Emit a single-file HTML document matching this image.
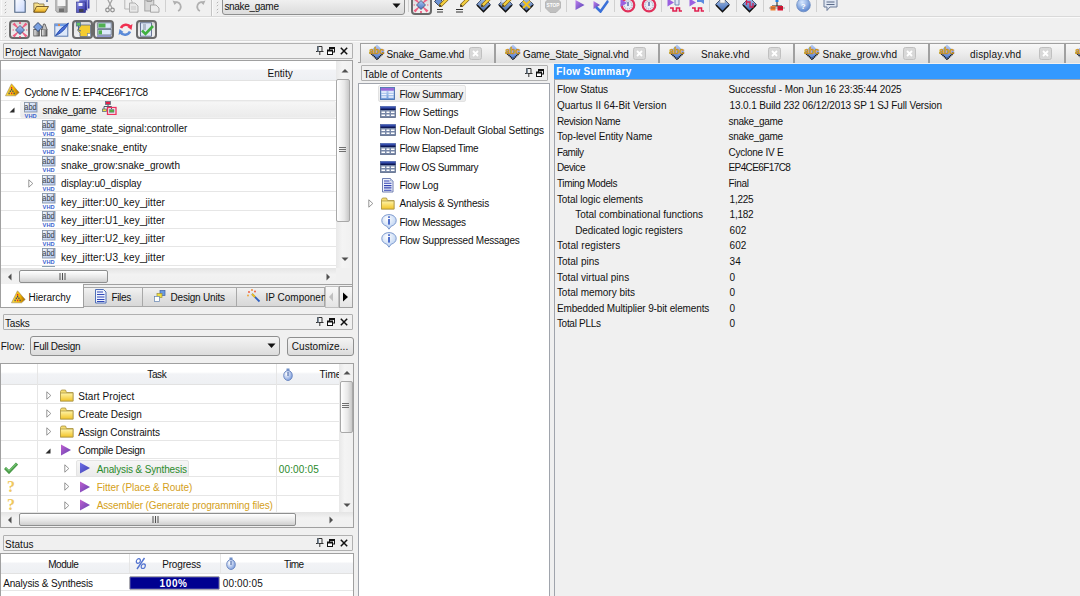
<!DOCTYPE html>
<html><head><meta charset="utf-8"><style>
html,body{margin:0;padding:0;width:1080px;height:596px;overflow:hidden;background:#f0f0f0;}
body{position:relative;}
div,svg{position:absolute;}
.t{font-family:"Liberation Sans",sans-serif;font-size:10px;line-height:10px;white-space:nowrap;color:#111;}
</style></head><body>
<div style="left:0px;top:16px;width:1080px;height:1px;background:#d9d9d9"></div><div style="left:0px;top:17px;width:1080px;height:1px;background:#fafafa"></div><div style="left:0px;top:40px;width:1080px;height:1px;background:#d9d9d9"></div><div style="left:0px;top:41px;width:1080px;height:1px;background:#fafafa"></div><div style="left:1px;top:0px;width:1px;height:15px;background:#fafafa"></div><svg style="left:3.5px;top:0.5px;" width="3" height="3" viewBox="0 0 3 3"><path d="M0.8 2.2 L2.2 0.8" stroke="#b4b4b4" stroke-width="1"/></svg><svg style="left:3.5px;top:4.0px;" width="3" height="3" viewBox="0 0 3 3"><path d="M0.8 2.2 L2.2 0.8" stroke="#b4b4b4" stroke-width="1"/></svg><svg style="left:3.5px;top:7.5px;" width="3" height="3" viewBox="0 0 3 3"><path d="M0.8 2.2 L2.2 0.8" stroke="#b4b4b4" stroke-width="1"/></svg><svg style="left:3.5px;top:11.0px;" width="3" height="3" viewBox="0 0 3 3"><path d="M0.8 2.2 L2.2 0.8" stroke="#b4b4b4" stroke-width="1"/></svg><svg style="left:14px;top:-3px;" width="12" height="16" viewBox="0 0 12 16"><defs><linearGradient id="nw" x1="0" y1="0" x2="1" y2="1"><stop offset="0" stop-color="#ffffff"/><stop offset="1" stop-color="#c8d8ff"/></linearGradient></defs><path d="M0.8 0.8 H8 L11.2 4 V15.2 H0.8 Z" fill="url(#nw)" stroke="#4e6482" stroke-width="1.1"/></svg><svg style="left:33px;top:-3px;" width="16" height="16" viewBox="0 0 16 16"><defs><linearGradient id="op" x1="0" y1="0" x2="0" y2="1"><stop offset="0" stop-color="#ffe680"/><stop offset="1" stop-color="#e8a818"/></linearGradient></defs><path d="M0.8 6 H5 L6 7 H11 V15 H0.8 Z" fill="#f6df8a" stroke="#8a7a50" stroke-width="0.9"/><path d="M0.8 15.2 L3.5 9.5 H15.5 L12.2 15.2 Z" fill="url(#op)" stroke="#6a5020" stroke-width="0.9"/><path d="M11 2 L14 2 L14 5" stroke="#4a6898" stroke-width="1.4" fill="none"/></svg><svg style="left:55px;top:-3px;" width="13" height="16" viewBox="0 0 13 16"><defs><linearGradient id="sv" x1="0" y1="0" x2="1" y2="0"><stop offset="0" stop-color="#c8c8c8"/><stop offset="1" stop-color="#909090"/></linearGradient></defs><path d="M0.8 0.8 H12.2 V15.2 H2 L0.8 14 Z" fill="url(#sv)" stroke="#8a8a8a" stroke-width="0.8"/><rect x="2.5" y="1" width="8" height="8" fill="#f4f4f4"/><rect x="4" y="11.5" width="5" height="3.5" fill="#707070"/></svg><svg style="left:76px;top:-3px;" width="14" height="16" viewBox="0 0 14 16"><defs><linearGradient id="sa" x1="0" y1="0" x2="1" y2="1"><stop offset="0" stop-color="#8a90e8"/><stop offset="1" stop-color="#3030a0"/></linearGradient></defs><rect x="5" y="0.5" width="8.5" height="11" fill="url(#sa)"/><rect x="3" y="2.5" width="8.5" height="11" fill="url(#sa)" stroke="#e8e8f8" stroke-width="0.5"/><rect x="0.5" y="5" width="9" height="10.5" fill="url(#sa)" stroke="#2a2a80" stroke-width="0.6"/><rect x="2.5" y="6" width="4" height="3" fill="#f0f0ff"/><rect x="3" y="12" width="4.5" height="3" fill="#404050"/></svg><div style="left:95.5px;top:0px;width:1px;height:12px;background:#d0d0d0"></div><svg style="left:105px;top:-3px;" width="10" height="16" viewBox="0 0 10 16"><path d="M2 1 L7 11 M8 1 L3 11" stroke="#a0a0a0" stroke-width="1.2"/><circle cx="2.5" cy="13" r="1.8" fill="none" stroke="#909090" stroke-width="1.2"/><circle cx="7.5" cy="13" r="1.8" fill="none" stroke="#909090" stroke-width="1.2"/></svg><svg style="left:124px;top:-3px;" width="15" height="16" viewBox="0 0 15 16"><path d="M0.8 2 H6 L8 4 V12 H0.8 Z" fill="#f0f0f0" stroke="#b0b0b0" stroke-width="0.9"/><path d="M5.5 6 H11 L14 9 V15.2 H5.5 Z" fill="#e8e8e8" stroke="#a8a8a8" stroke-width="0.9"/><path d="M7 10 H12 M7 12 H12" stroke="#c0c0c0" stroke-width="0.8"/></svg><svg style="left:144px;top:-3px;" width="16" height="16" viewBox="0 0 16 16"><rect x="0.8" y="3" width="9" height="11" fill="#d8d8d8" stroke="#a0a0a0" stroke-width="0.9"/><rect x="3" y="1.5" width="4.5" height="3" fill="#b8b8b8" stroke="#909090" stroke-width="0.7"/><path d="M6.5 8 H12 L15 11 V15.2 H6.5 Z" fill="#ececec" stroke="#a0a0a0" stroke-width="0.9"/></svg><div style="left:164.5px;top:0px;width:1px;height:12px;background:#d0d0d0"></div><svg style="left:172px;top:-3px;" width="12" height="16" viewBox="0 0 12 16"><path d="M2.5 6 A4 4.5 0 1 1 6 14" fill="none" stroke="#b0b0b0" stroke-width="1.8"/><path d="M0.5 3.5 L2.5 8 L5.5 5 Z" fill="#b0b0b0"/></svg><svg style="left:194px;top:-3px;" width="12" height="16" viewBox="0 0 12 16"><path d="M9.5 6 A4 4.5 0 1 0 6 14" fill="none" stroke="#b0b0b0" stroke-width="1.8"/><path d="M11.5 3.5 L9.5 8 L6.5 5 Z" fill="#b0b0b0"/></svg><div style="left:211px;top:0px;width:1px;height:16px;background:#c4c4c4"></div><div style="left:212px;top:0px;width:1px;height:16px;background:#fafafa"></div><svg style="left:215.5px;top:0.5px;" width="3" height="3" viewBox="0 0 3 3"><path d="M0.8 2.2 L2.2 0.8" stroke="#b4b4b4" stroke-width="1"/></svg><svg style="left:215.5px;top:4.0px;" width="3" height="3" viewBox="0 0 3 3"><path d="M0.8 2.2 L2.2 0.8" stroke="#b4b4b4" stroke-width="1"/></svg><svg style="left:215.5px;top:7.5px;" width="3" height="3" viewBox="0 0 3 3"><path d="M0.8 2.2 L2.2 0.8" stroke="#b4b4b4" stroke-width="1"/></svg><svg style="left:215.5px;top:11.0px;" width="3" height="3" viewBox="0 0 3 3"><path d="M0.8 2.2 L2.2 0.8" stroke="#b4b4b4" stroke-width="1"/></svg><div style="left:221.5px;top:-4px;width:183px;height:18.5px;border:1px solid #8e8f8f;border-radius:3px;box-sizing:border-box;background:linear-gradient(#f4f4f4,#e8e8e8 50%,#dcdcdc)"></div><div class="t" style="left:224.4px;top:1.5px;letter-spacing:-0.300px;">snake_game</div><svg style="left:392px;top:3px;" width="9" height="6" viewBox="0 0 9 6"><path d="M0.5 0.5 H8.5 L4.5 5 Z" fill="#111"/></svg><div style="left:407.5px;top:0px;width:1px;height:12px;background:#d0d0d0"></div><div style="left:410.5px;top:-4px;width:21.5px;height:18.5px;border:2px solid #6a6a6a;border-radius:4px;box-sizing:border-box;background:linear-gradient(#d4d4d4,#e6e6e6 40%,#f0f0f0)"></div><svg style="left:413px;top:-3.5px;" width="16" height="16" viewBox="0 0 16 16"><path d="M8 8 L0.5 2.5 L2.5 0.5 Z M8 8 L13.5 0.5 L15.5 2.5 Z M8 8 L15.5 13.5 L13.5 15.5 Z M8 8 L2.5 15.5 L0.5 13.5 Z" fill="#f05078" opacity="0.9"/><circle cx="8" cy="1" r="0.9" fill="#e83060"/><circle cx="8" cy="15" r="0.9" fill="#e83060"/><circle cx="1.2" cy="8" r="0.7" fill="#f06080"/><circle cx="14.8" cy="8" r="0.7" fill="#f06080"/><defs><linearGradient id="sdg" x1="0" y1="0" x2="0" y2="1"><stop offset="0" stop-color="#a8c8f8"/><stop offset="1" stop-color="#4a70b8"/></linearGradient></defs><path d="M8 3.5 L12.5 8 L8 12.5 L3.5 8 Z" fill="url(#sdg)" stroke="#304060" stroke-width="0.7"/></svg><svg style="left:434px;top:-3px;" width="9" height="9" viewBox="0 0 9 9"><path d="M4.5 0.5 L8.5 4.5 L4.5 8.5 L0.5 4.5 Z" fill="#6a90d0" stroke="#202840" stroke-width="0.8"/></svg><svg style="left:439px;top:-4px;" width="11" height="11" viewBox="0 0 11 11"><path d="M1.5 9.5 L8.5 2.5" stroke="#7a5a10" stroke-width="3.6" stroke-linecap="round"/><path d="M1.5 9.5 L8.5 2.5" stroke="#f4d040" stroke-width="2.4"/><path d="M8 3 L10 1" stroke="#e8204a" stroke-width="2.6"/><path d="M0.5 10.5 L2 9" stroke="#404040" stroke-width="1.2"/></svg><svg style="left:437px;top:9px;" width="6" height="4" viewBox="0 0 6 4"><path d="M0 0.5 H6 M0 3 H6" stroke="#303030" stroke-width="1"/></svg><svg style="left:460px;top:-4px;" width="11" height="11" viewBox="0 0 11 11"><path d="M1.5 9.5 L8.5 2.5" stroke="#7a5a10" stroke-width="3.6" stroke-linecap="round"/><path d="M1.5 9.5 L8.5 2.5" stroke="#f4d040" stroke-width="2.4"/><path d="M8 3 L10 1" stroke="#e8204a" stroke-width="2.6"/><path d="M0.5 10.5 L2 9" stroke="#404040" stroke-width="1.2"/></svg><svg style="left:456px;top:9px;" width="7" height="4" viewBox="0 0 7 4"><path d="M0 0.5 H7 M0 3 H7" stroke="#303030" stroke-width="1"/></svg><svg style="left:476px;top:-3px;" width="16" height="16" viewBox="0 0 16 16"><defs><linearGradient id="dg476-3" x1="0" y1="0" x2="0" y2="1"><stop offset="0" stop-color="#a8c4ee"/><stop offset="1" stop-color="#4a6ca8"/></linearGradient></defs><path d="M7.5 0.5 L14.5 7.5 L7.5 14.5 L0.5 7.5 Z" fill="url(#dg476-3)" stroke="#3a4a68" stroke-width="0.9"/><path d="M1 8.0 L7.5 14.7 L14 8.0" fill="none" stroke="#101010" stroke-width="1.6"/></svg><svg style="left:481px;top:-4px;" width="11" height="11" viewBox="0 0 11 11"><path d="M1.5 9.5 L8.5 2.5" stroke="#7a5a10" stroke-width="3.6" stroke-linecap="round"/><path d="M1.5 9.5 L8.5 2.5" stroke="#f4d040" stroke-width="2.4"/><path d="M8 3 L10 1" stroke="#e8204a" stroke-width="2.6"/><path d="M0.5 10.5 L2 9" stroke="#404040" stroke-width="1.2"/></svg><svg style="left:497.5px;top:-3px;" width="16" height="16" viewBox="0 0 16 16"><defs><linearGradient id="dg497-3" x1="0" y1="0" x2="0" y2="1"><stop offset="0" stop-color="#a8c4ee"/><stop offset="1" stop-color="#4a6ca8"/></linearGradient></defs><path d="M7.5 0.5 L14.5 7.5 L7.5 14.5 L0.5 7.5 Z" fill="url(#dg497-3)" stroke="#3a4a68" stroke-width="0.9"/><path d="M1 8.0 L7.5 14.7 L14 8.0" fill="none" stroke="#101010" stroke-width="1.6"/><rect x="3" y="0" width="6" height="6" fill="#d8e0f0" stroke="#8090b0" stroke-width="0.6"/></svg><svg style="left:502px;top:-4px;" width="11" height="11" viewBox="0 0 11 11"><path d="M1.5 9.5 L8.5 2.5" stroke="#7a5a10" stroke-width="3.6" stroke-linecap="round"/><path d="M1.5 9.5 L8.5 2.5" stroke="#f4d040" stroke-width="2.4"/><path d="M8 3 L10 1" stroke="#e8204a" stroke-width="2.6"/><path d="M0.5 10.5 L2 9" stroke="#404040" stroke-width="1.2"/></svg><svg style="left:519px;top:-3px;" width="16" height="16" viewBox="0 0 16 16"><defs><linearGradient id="dg519-3" x1="0" y1="0" x2="0" y2="1"><stop offset="0" stop-color="#a8c4ee"/><stop offset="1" stop-color="#4a6ca8"/></linearGradient></defs><path d="M7.5 0.5 L14.5 7.5 L7.5 14.5 L0.5 7.5 Z" fill="url(#dg519-3)" stroke="#3a4a68" stroke-width="0.9"/><path d="M1 8.0 L7.5 14.7 L14 8.0" fill="none" stroke="#101010" stroke-width="1.6"/><path d="M4 4 L11 11 M11 4 L4 11" stroke="#f0c020" stroke-width="2"/></svg><div style="left:539.5px;top:0px;width:1px;height:12px;background:#d0d0d0"></div><svg style="left:545px;top:-3px;" width="16" height="16" viewBox="0 0 16 16"><path d="M5 0.5 H11 L15.5 5 V11 L11 15.5 H5 L0.5 11 V5 Z" fill="#c0c0c0" stroke="#b0b0b0" stroke-width="0.8"/><text x="1.5" y="10" font-family="Liberation Sans" font-weight="bold" font-size="5.5" fill="#fff" textLength="13" lengthAdjust="spacingAndGlyphs">STOP</text></svg><div style="left:566px;top:0px;width:1px;height:12px;background:#d0d0d0"></div><svg style="left:575px;top:-3px;" width="10" height="14" viewBox="0 0 10 14"><defs><linearGradient id="pl1" x1="0" y1="0" x2="1" y2="1"><stop offset="0" stop-color="#c080f0"/><stop offset="1" stop-color="#5040b0"/></linearGradient></defs><path d="M0.5 3 L9.5 8 L0.5 13 Z" fill="url(#pl1)"/></svg><svg style="left:593px;top:-3px;" width="16" height="16" viewBox="0 0 16 16"><defs><linearGradient id="pl2" x1="0" y1="0" x2="1" y2="1"><stop offset="0" stop-color="#c080f0"/><stop offset="1" stop-color="#5040b0"/></linearGradient></defs><path d="M0.5 4 L7 8 L0.5 12 Z" fill="url(#pl2)"/><path d="M3 10 L7.5 14.5 L15 4" fill="none" stroke="#3a70d8" stroke-width="2.6"/><path d="M12 0.5 L15.5 3" stroke="#2050b0" stroke-width="2"/></svg><div style="left:613.5px;top:0px;width:1px;height:12px;background:#d0d0d0"></div><svg style="left:619.5px;top:-3px;" width="16" height="16" viewBox="0 0 16 16"><circle cx="8" cy="8" r="6.3" fill="#e8ecf8" stroke="#e0305a" stroke-width="2.2"/><circle cx="8" cy="8" r="4" fill="none" stroke="#606070" stroke-width="0.6" stroke-dasharray="1 1"/><rect x="7" y="5" width="2" height="4" fill="#8090c0"/><path d="M3 1 H13" stroke="#606060" stroke-width="1.5"/><path d="M0.5 2 L7 6 L0.5 10 Z" fill="#9a60e0"/></svg><svg style="left:641px;top:-3px;" width="16" height="16" viewBox="0 0 16 16"><circle cx="8" cy="8" r="6.3" fill="#e8ecf8" stroke="#e0305a" stroke-width="2.2"/><circle cx="8" cy="8" r="4" fill="none" stroke="#606070" stroke-width="0.6" stroke-dasharray="1 1"/><rect x="7" y="5" width="2" height="4" fill="#8090c0"/><path d="M3 1 H13" stroke="#606060" stroke-width="1.5"/></svg><div style="left:661px;top:0px;width:1px;height:12px;background:#d0d0d0"></div><svg style="left:666.5px;top:-3px;" width="16" height="16" viewBox="0 0 16 16"><path d="M0.5 1.5 L7 5.5 L0.5 9.5 Z" fill="#9a60e0"/><path d="M3 11 H6 V14 H9.5 V11 H12.5 V14 H15" fill="none" stroke="#e02050" stroke-width="1.6"/><path d="M8 0 V8 H12 V0" fill="#dde6f6" stroke="#6a80b0" stroke-width="0.9"/></svg><svg style="left:688.5px;top:-3px;" width="16" height="16" viewBox="0 0 16 16"><path d="M0.5 1.5 L7 5.5 L0.5 9.5 Z" fill="#9a60e0"/><path d="M3 11 H6 V14 H9.5 V11 H12.5 V14 H15" fill="none" stroke="#e02050" stroke-width="1.6"/><path d="M8 3 H12 L15 0.5 V7 L12 5 H8 Z" fill="#5a8ae0"/></svg><div style="left:709px;top:0px;width:1px;height:12px;background:#d0d0d0"></div><svg style="left:715px;top:-3px;" width="16" height="16" viewBox="0 0 16 16"><defs><linearGradient id="dg715-3" x1="0" y1="0" x2="0" y2="1"><stop offset="0" stop-color="#b0ccf4"/><stop offset="1" stop-color="#3a64b0"/></linearGradient></defs><path d="M7.5 0.5 L14.5 7.5 L7.5 14.5 L0.5 7.5 Z" fill="url(#dg715-3)" stroke="#3a4a68" stroke-width="0.9"/><path d="M1 8.0 L7.5 14.7 L14 8.0" fill="none" stroke="#101010" stroke-width="1.6"/><rect x="5" y="0" width="5" height="6" fill="#f4f4f4" stroke="#909090" stroke-width="0.5"/></svg><div style="left:736px;top:0px;width:1px;height:12px;background:#d0d0d0"></div><svg style="left:742px;top:-3px;" width="16" height="16" viewBox="0 0 16 16"><defs><linearGradient id="dg742-3" x1="0" y1="0" x2="0" y2="1"><stop offset="0" stop-color="#b0ccf4"/><stop offset="1" stop-color="#3a64b0"/></linearGradient></defs><path d="M7.5 0.5 L14.5 7.5 L7.5 14.5 L0.5 7.5 Z" fill="url(#dg742-3)" stroke="#3a4a68" stroke-width="0.9"/><path d="M1 8.0 L7.5 14.7 L14 8.0" fill="none" stroke="#101010" stroke-width="1.6"/><path d="M4.5 2 V8 M4.5 5 H8 V10 H11 V6" stroke="#d02050" stroke-width="1.3" fill="none"/></svg><div style="left:762.5px;top:0px;width:1px;height:12px;background:#d0d0d0"></div><svg style="left:769px;top:-3px;" width="16" height="16" viewBox="0 0 16 16"><rect x="6.5" y="0" width="3" height="5" fill="#2080e0"/><path d="M8 5 V9 M3 9 H13" stroke="#202020" stroke-width="1"/><rect x="1.5" y="9" width="5" height="4.5" fill="#f08030"/><rect x="8.5" y="9" width="5.5" height="4.5" fill="#e01030"/><path d="M0 11 H16" stroke="#404040" stroke-width="0.5"/></svg><div style="left:789px;top:0px;width:1px;height:12px;background:#d0d0d0"></div><svg style="left:795.5px;top:-3px;" width="15" height="16" viewBox="0 0 15 16"><defs><radialGradient id="hg" cx="0.4" cy="0.3" r="0.8"><stop offset="0" stop-color="#d8e8ff"/><stop offset="1" stop-color="#4a78c8"/></radialGradient></defs><circle cx="7.5" cy="8" r="6.8" fill="url(#hg)" stroke="#6a8ac0" stroke-width="0.8"/><text x="4.8" y="11.5" font-family="Liberation Sans" font-weight="bold" font-size="8" fill="#fff">?</text></svg><div style="left:816px;top:0px;width:1px;height:12px;background:#d0d0d0"></div><svg style="left:822.5px;top:-3px;" width="15" height="16" viewBox="0 0 15 16"><path d="M1 2 H14 V10 H7 L4 13.5 V10 H1 Z" fill="#dfe6f2" stroke="#6a7a98" stroke-width="1"/><path d="M3.5 5 H11.5 M3.5 7.5 H11.5" stroke="#5a6a88" stroke-width="1"/></svg><div style="left:1px;top:18px;width:1px;height:22px;background:#fafafa"></div><svg style="left:3.5px;top:21.0px;" width="3" height="3" viewBox="0 0 3 3"><path d="M0.8 2.2 L2.2 0.8" stroke="#b4b4b4" stroke-width="1"/></svg><svg style="left:3.5px;top:24.5px;" width="3" height="3" viewBox="0 0 3 3"><path d="M0.8 2.2 L2.2 0.8" stroke="#b4b4b4" stroke-width="1"/></svg><svg style="left:3.5px;top:28.0px;" width="3" height="3" viewBox="0 0 3 3"><path d="M0.8 2.2 L2.2 0.8" stroke="#b4b4b4" stroke-width="1"/></svg><svg style="left:3.5px;top:31.5px;" width="3" height="3" viewBox="0 0 3 3"><path d="M0.8 2.2 L2.2 0.8" stroke="#b4b4b4" stroke-width="1"/></svg><svg style="left:3.5px;top:35.0px;" width="3" height="3" viewBox="0 0 3 3"><path d="M0.8 2.2 L2.2 0.8" stroke="#b4b4b4" stroke-width="1"/></svg><div style="left:9.3px;top:20.2px;width:20.9px;height:18.400000000000002px;border:2px solid #6a6a6a;border-radius:4px;box-sizing:border-box;background:linear-gradient(#d4d4d4,#e6e6e6 40%,#f0f0f0)"></div><svg style="left:11.8px;top:21.5px;" width="16" height="16" viewBox="0 0 16 16"><path d="M8 8 L0.5 2.5 L2.5 0.5 Z M8 8 L13.5 0.5 L15.5 2.5 Z M8 8 L15.5 13.5 L13.5 15.5 Z M8 8 L2.5 15.5 L0.5 13.5 Z" fill="#f05078" opacity="0.9"/><circle cx="8" cy="1" r="0.9" fill="#e83060"/><circle cx="8" cy="15" r="0.9" fill="#e83060"/><circle cx="1.2" cy="8" r="0.7" fill="#f06080"/><circle cx="14.8" cy="8" r="0.7" fill="#f06080"/><defs><linearGradient id="sdg" x1="0" y1="0" x2="0" y2="1"><stop offset="0" stop-color="#a8c8f8"/><stop offset="1" stop-color="#4a70b8"/></linearGradient></defs><path d="M8 3.5 L12.5 8 L8 12.5 L3.5 8 Z" fill="url(#sdg)" stroke="#304060" stroke-width="0.7"/></svg><svg style="left:33px;top:22px;" width="15" height="15" viewBox="0 0 15 15"><defs><linearGradient id="bn" x1="0" y1="0" x2="1" y2="0"><stop offset="0" stop-color="#f0f0f0"/><stop offset="1" stop-color="#606060"/></linearGradient></defs><rect x="0.8" y="7.5" width="5.5" height="6.5" fill="url(#bn)" stroke="#505050" stroke-width="0.8"/><rect x="8.5" y="7.5" width="5.5" height="6.5" fill="url(#bn)" stroke="#505050" stroke-width="0.8"/><path d="M9 7.5 L10.5 2 H12 L14 7.5" fill="#c0c0c0" stroke="#505050" stroke-width="0.8"/><path d="M5 0.5 L9.5 5 L5 9.5 L0.5 5 Z" fill="#7aa0e0" stroke="#203050" stroke-width="0.8"/></svg><svg style="left:54px;top:22px;" width="15" height="15" viewBox="0 0 15 15"><rect x="0.8" y="2" width="13" height="12.2" fill="#dde8fa" stroke="#5a7ab0" stroke-width="1"/><rect x="1" y="2.2" width="13" height="2" fill="#6a9ae8"/><circle cx="5" cy="3" r="1" fill="#f08020"/><path d="M1.5 13.5 Q6 6 14.5 1 Q11 9 3 13 Z" fill="#4a70d8" stroke="#1a40a0" stroke-width="0.8"/></svg><div style="left:72.2px;top:20.2px;width:21.200000000000003px;height:18.400000000000002px;border:2px solid #6a6a6a;border-radius:4px;box-sizing:border-box;background:linear-gradient(#d4d4d4,#e6e6e6 40%,#f0f0f0)"></div><svg style="left:75.5px;top:22px;" width="15" height="15" viewBox="0 0 15 15"><path d="M4 3 H14.5 V14.5 H4 V11 L1.5 8 L4 5 Z" fill="#f4cc30" stroke="#5a6a88" stroke-width="0.8"/><rect x="0.5" y="0.5" width="4" height="3.5" fill="#60c060" stroke="#4a6a8a" stroke-width="0.7"/><path d="M2.5 4 V8 L5 9" stroke="#4a6a8a" stroke-width="1" fill="none"/><rect x="11.5" y="11.5" width="3" height="3" fill="#ffffff" stroke="#6a80a0" stroke-width="0.6"/></svg><div style="left:93.4px;top:20.2px;width:21.099999999999994px;height:18.400000000000002px;border:2px solid #6a6a6a;border-radius:4px;box-sizing:border-box;background:linear-gradient(#d4d4d4,#e6e6e6 40%,#f0f0f0)"></div><svg style="left:96.5px;top:22px;" width="15" height="15" viewBox="0 0 15 15"><rect x="0.8" y="0.8" width="13.4" height="5.5" fill="#dde8fa" stroke="#5a6a80" stroke-width="0.8"/><rect x="1.5" y="1.5" width="7" height="4" fill="#50b050"/><rect x="0.8" y="7.5" width="13.4" height="5.5" fill="#dde8fa" stroke="#5a6a80" stroke-width="0.8"/><rect x="1.5" y="8.3" width="3.5" height="4" fill="#50b050"/><path d="M0.5 14.3 H14.5" stroke="#3040b0" stroke-width="1.4" stroke-dasharray="1 1"/></svg><svg style="left:118px;top:22px;" width="15" height="15" viewBox="0 0 15 15"><path d="M3 6 A5.5 5.5 0 0 1 12.5 5" fill="none" stroke="#f03050" stroke-width="2.6"/><path d="M14.5 2 L13.5 8 L9.5 5 Z" fill="#f03050"/><path d="M12 9.5 A5.5 5.5 0 0 1 2.5 10.5" fill="none" stroke="#5a8ad8" stroke-width="2.6"/><path d="M0.5 13 L1.5 7 L5.5 10 Z" fill="#5a8ad8"/></svg><div style="left:136px;top:20.2px;width:20.80000000000001px;height:18.400000000000002px;border:2px solid #6a6a6a;border-radius:4px;box-sizing:border-box;background:linear-gradient(#d4d4d4,#e6e6e6 40%,#f0f0f0)"></div><svg style="left:139px;top:22px;" width="15" height="15" viewBox="0 0 15 15"><rect x="1.5" y="0.8" width="11" height="13.4" fill="#dde6f6" stroke="#4a5a80" stroke-width="0.8"/><path d="M4 3 H7 M4 5 H7 M4 7 H7" stroke="#707888" stroke-width="0.8"/><path d="M3 8.5 L6.5 12 L14 4" fill="none" stroke="#40b040" stroke-width="2.6"/></svg><div style="left:3px;top:43px;width:350px;height:16px;border:1px solid #b0b0b0;border-radius:1px;box-sizing:border-box;background:#f0f0f0"></div><div class="t" style="left:5px;top:48px;letter-spacing:-0.023px;">Project Navigator</div><svg style="left:316px;top:46px;" width="8" height="9" viewBox="0 0 8 9"><path d="M1.5 0.5 H6 V5.5 H1.5 Z M0 5.5 H7.5 M3.8 5.5 V9" fill="none" stroke="#333" stroke-width="1"/><path d="M1.5 0.5 H3 V5.5 H1.5 Z" fill="#8090a0"/></svg><svg style="left:327px;top:47px;" width="8" height="8" viewBox="0 0 8 8"><rect x="2.5" y="0.5" width="5" height="4.5" fill="none" stroke="#111" stroke-width="1"/><rect x="0.5" y="3" width="5" height="4.5" fill="#fff" stroke="#111" stroke-width="1"/><path d="M2.5 1.3 H7.5 M0.5 3.8 H5.5" stroke="#111" stroke-width="1.4"/></svg><svg style="left:340px;top:47px;" width="8" height="8" viewBox="0 0 8 8"><path d="M0.8 0.8 L7.2 7.2 M7.2 0.8 L0.8 7.2" stroke="#111" stroke-width="1.5"/></svg><div style="left:0px;top:60px;width:353px;height:225px;border:1px solid #a0a0a0;border-bottom:none;box-sizing:border-box;background:#fff"></div><div style="left:1px;top:61px;width:335px;height:19px;background:linear-gradient(#ffffff 40%,#f2f3f6 50%,#eef0f3)"></div><div style="left:1px;top:80px;width:335px;height:1px;background:#e2e2e2"></div><div class="t" style="left:267.5px;top:69px;letter-spacing:0.038px;">Entity</div><div style="left:1px;top:99.6px;width:335px;height:1px;background:#e6e6e6"></div><div style="left:1px;top:117.93px;width:335px;height:1px;background:#e6e6e6"></div><div style="left:1px;top:136.26px;width:335px;height:1px;background:#e6e6e6"></div><div style="left:1px;top:154.59px;width:335px;height:1px;background:#e6e6e6"></div><div style="left:1px;top:172.92px;width:335px;height:1px;background:#e6e6e6"></div><div style="left:1px;top:191.25px;width:335px;height:1px;background:#e6e6e6"></div><div style="left:1px;top:209.58px;width:335px;height:1px;background:#e6e6e6"></div><div style="left:1px;top:227.91px;width:335px;height:1px;background:#e6e6e6"></div><div style="left:1px;top:246.24px;width:335px;height:1px;background:#e6e6e6"></div><div style="left:1px;top:264.57px;width:335px;height:1px;background:#e6e6e6"></div><div style="left:20px;top:100.5px;width:316px;height:17px;background:linear-gradient(#f6f6f6,#ebebeb);border:1px solid #f0f0f0;border-radius:2px;box-sizing:border-box"></div><div class="t" style="left:24.5px;top:87.6px;letter-spacing:-0.340px;">Cyclone IV E: EP4CE6F17C8</div><div class="t" style="left:42.5px;top:105.93px;letter-spacing:-0.344px;">snake_game</div><div class="t" style="left:61px;top:124.26px;letter-spacing:-0.060px;">game_state_signal:controller</div><svg style="left:42px;top:119.7px;" width="14" height="16" viewBox="0 0 14 16"><defs><linearGradient id="vg" x1="0" y1="0" x2="1" y2="1"><stop offset="0" stop-color="#f4f7fd"/><stop offset="1" stop-color="#aec4ee"/></linearGradient></defs><rect x="0.5" y="0.5" width="12.5" height="9.5" fill="url(#vg)" stroke="#8796a8" stroke-width="0.9"/><text x="0.3" y="8.4" font-family="Liberation Sans" font-size="8.6" fill="#3a3f46" textLength="12.4" lengthAdjust="spacingAndGlyphs">abd</text><text x="0.6" y="15.5" font-family="Liberation Sans" font-weight="bold" font-size="6" fill="#3a62d0" textLength="12" lengthAdjust="spacingAndGlyphs">VHD</text></svg><div class="t" style="left:61px;top:142.59px;letter-spacing:0.029px;">snake:snake_entity</div><svg style="left:42px;top:138.0px;" width="14" height="16" viewBox="0 0 14 16"><defs><linearGradient id="vg" x1="0" y1="0" x2="1" y2="1"><stop offset="0" stop-color="#f4f7fd"/><stop offset="1" stop-color="#aec4ee"/></linearGradient></defs><rect x="0.5" y="0.5" width="12.5" height="9.5" fill="url(#vg)" stroke="#8796a8" stroke-width="0.9"/><text x="0.3" y="8.4" font-family="Liberation Sans" font-size="8.6" fill="#3a3f46" textLength="12.4" lengthAdjust="spacingAndGlyphs">abd</text><text x="0.6" y="15.5" font-family="Liberation Sans" font-weight="bold" font-size="6" fill="#3a62d0" textLength="12" lengthAdjust="spacingAndGlyphs">VHD</text></svg><div class="t" style="left:61px;top:160.92px;">snake_grow:snake_growth</div><svg style="left:42px;top:156.3px;" width="14" height="16" viewBox="0 0 14 16"><defs><linearGradient id="vg" x1="0" y1="0" x2="1" y2="1"><stop offset="0" stop-color="#f4f7fd"/><stop offset="1" stop-color="#aec4ee"/></linearGradient></defs><rect x="0.5" y="0.5" width="12.5" height="9.5" fill="url(#vg)" stroke="#8796a8" stroke-width="0.9"/><text x="0.3" y="8.4" font-family="Liberation Sans" font-size="8.6" fill="#3a3f46" textLength="12.4" lengthAdjust="spacingAndGlyphs">abd</text><text x="0.6" y="15.5" font-family="Liberation Sans" font-weight="bold" font-size="6" fill="#3a62d0" textLength="12" lengthAdjust="spacingAndGlyphs">VHD</text></svg><div class="t" style="left:61px;top:179.25px;letter-spacing:-0.066px;">display:u0_display</div><svg style="left:42px;top:174.7px;" width="14" height="16" viewBox="0 0 14 16"><defs><linearGradient id="vg" x1="0" y1="0" x2="1" y2="1"><stop offset="0" stop-color="#f4f7fd"/><stop offset="1" stop-color="#aec4ee"/></linearGradient></defs><rect x="0.5" y="0.5" width="12.5" height="9.5" fill="url(#vg)" stroke="#8796a8" stroke-width="0.9"/><text x="0.3" y="8.4" font-family="Liberation Sans" font-size="8.6" fill="#3a3f46" textLength="12.4" lengthAdjust="spacingAndGlyphs">abd</text><text x="0.6" y="15.5" font-family="Liberation Sans" font-weight="bold" font-size="6" fill="#3a62d0" textLength="12" lengthAdjust="spacingAndGlyphs">VHD</text></svg><div class="t" style="left:61px;top:197.58px;letter-spacing:0.121px;">key_jitter:U0_key_jitter</div><svg style="left:42px;top:193.0px;" width="14" height="16" viewBox="0 0 14 16"><defs><linearGradient id="vg" x1="0" y1="0" x2="1" y2="1"><stop offset="0" stop-color="#f4f7fd"/><stop offset="1" stop-color="#aec4ee"/></linearGradient></defs><rect x="0.5" y="0.5" width="12.5" height="9.5" fill="url(#vg)" stroke="#8796a8" stroke-width="0.9"/><text x="0.3" y="8.4" font-family="Liberation Sans" font-size="8.6" fill="#3a3f46" textLength="12.4" lengthAdjust="spacingAndGlyphs">abd</text><text x="0.6" y="15.5" font-family="Liberation Sans" font-weight="bold" font-size="6" fill="#3a62d0" textLength="12" lengthAdjust="spacingAndGlyphs">VHD</text></svg><div class="t" style="left:61px;top:215.91px;letter-spacing:0.121px;">key_jitter:U1_key_jitter</div><svg style="left:42px;top:211.3px;" width="14" height="16" viewBox="0 0 14 16"><defs><linearGradient id="vg" x1="0" y1="0" x2="1" y2="1"><stop offset="0" stop-color="#f4f7fd"/><stop offset="1" stop-color="#aec4ee"/></linearGradient></defs><rect x="0.5" y="0.5" width="12.5" height="9.5" fill="url(#vg)" stroke="#8796a8" stroke-width="0.9"/><text x="0.3" y="8.4" font-family="Liberation Sans" font-size="8.6" fill="#3a3f46" textLength="12.4" lengthAdjust="spacingAndGlyphs">abd</text><text x="0.6" y="15.5" font-family="Liberation Sans" font-weight="bold" font-size="6" fill="#3a62d0" textLength="12" lengthAdjust="spacingAndGlyphs">VHD</text></svg><div class="t" style="left:61px;top:234.24px;letter-spacing:0.121px;">key_jitter:U2_key_jitter</div><svg style="left:42px;top:229.6px;" width="14" height="16" viewBox="0 0 14 16"><defs><linearGradient id="vg" x1="0" y1="0" x2="1" y2="1"><stop offset="0" stop-color="#f4f7fd"/><stop offset="1" stop-color="#aec4ee"/></linearGradient></defs><rect x="0.5" y="0.5" width="12.5" height="9.5" fill="url(#vg)" stroke="#8796a8" stroke-width="0.9"/><text x="0.3" y="8.4" font-family="Liberation Sans" font-size="8.6" fill="#3a3f46" textLength="12.4" lengthAdjust="spacingAndGlyphs">abd</text><text x="0.6" y="15.5" font-family="Liberation Sans" font-weight="bold" font-size="6" fill="#3a62d0" textLength="12" lengthAdjust="spacingAndGlyphs">VHD</text></svg><div class="t" style="left:61px;top:252.57px;letter-spacing:0.121px;">key_jitter:U3_key_jitter</div><svg style="left:42px;top:248.0px;" width="14" height="16" viewBox="0 0 14 16"><defs><linearGradient id="vg" x1="0" y1="0" x2="1" y2="1"><stop offset="0" stop-color="#f4f7fd"/><stop offset="1" stop-color="#aec4ee"/></linearGradient></defs><rect x="0.5" y="0.5" width="12.5" height="9.5" fill="url(#vg)" stroke="#8796a8" stroke-width="0.9"/><text x="0.3" y="8.4" font-family="Liberation Sans" font-size="8.6" fill="#3a3f46" textLength="12.4" lengthAdjust="spacingAndGlyphs">abd</text><text x="0.6" y="15.5" font-family="Liberation Sans" font-weight="bold" font-size="6" fill="#3a62d0" textLength="12" lengthAdjust="spacingAndGlyphs">VHD</text></svg><svg style="left:4.5px;top:83px;" width="15" height="14" viewBox="0 0 15 14"><defs><linearGradient id="wg" x1="0" y1="0" x2="1" y2="0"><stop offset="0" stop-color="#ffe040"/><stop offset="0.6" stop-color="#f5b800"/><stop offset="1" stop-color="#a06000"/></linearGradient></defs><path d="M6.5 0.8 L0.5 12.8 L10.5 12.8 L14.2 9.5 Z" fill="url(#wg)" stroke="#9a8a60" stroke-width="0.6"/><rect x="6" y="4" width="1.2" height="1.6" fill="#e0203a"/><rect x="6" y="5.8" width="1.2" height="1.6" fill="#304070"/><rect x="4.7" y="7.5" width="1.2" height="1.6" fill="#304070"/><rect x="7.3" y="7.5" width="1.2" height="1.6" fill="#304070"/><rect x="3.5" y="9.6" width="1.2" height="1.6" fill="#304070"/><rect x="6" y="9.6" width="1.2" height="1.6" fill="#e0203a"/><rect x="8.5" y="9.6" width="1.2" height="1.6" fill="#304070"/></svg><svg style="left:24px;top:101.5px;" width="14" height="16" viewBox="0 0 14 16"><defs><linearGradient id="vg" x1="0" y1="0" x2="1" y2="1"><stop offset="0" stop-color="#f4f7fd"/><stop offset="1" stop-color="#aec4ee"/></linearGradient></defs><rect x="0.5" y="0.5" width="12.5" height="9.5" fill="url(#vg)" stroke="#8796a8" stroke-width="0.9"/><text x="0.3" y="8.4" font-family="Liberation Sans" font-size="8.6" fill="#3a3f46" textLength="12.4" lengthAdjust="spacingAndGlyphs">abd</text><text x="0.6" y="15.5" font-family="Liberation Sans" font-weight="bold" font-size="6" fill="#3a62d0" textLength="12" lengthAdjust="spacingAndGlyphs">VHD</text></svg><svg style="left:9px;top:106.5px;" width="6" height="6" viewBox="0 0 6 6"><path d="M5.5 0.5 L5.5 5.5 L0.5 5.5 Z" fill="#2b2b2b"/></svg><svg style="left:102px;top:100.5px;" width="15" height="14" viewBox="0 0 15 14"><rect x="3.5" y="0.5" width="5" height="3" fill="#e8204a" stroke="#607080" stroke-width="0.8"/><path d="M6 3.5 V5.5 M2 5.5 H9.5 M2 5.5 V8 M9.5 5.5 V8" stroke="#4a5a6a" stroke-width="1" fill="none"/><rect x="0.5" y="8" width="4" height="2.5" fill="#f0e040" stroke="#607080" stroke-width="0.8"/><rect x="5.5" y="6.5" width="8.5" height="7" fill="none" stroke="#ee3060" stroke-width="1.3"/><rect x="7.5" y="8.7" width="4.5" height="2.5" fill="#50b040" stroke="#607080" stroke-width="0.6"/></svg><svg style="left:28px;top:178.5px;" width="6" height="9" viewBox="0 0 6 9"><path d="M0.8 0.8 L4.8 4.5 L0.8 8.2 Z" fill="#fff" stroke="#8a8a8a" stroke-width="0.9"/></svg><div style="left:42px;top:265.5px;width:13px;height:1.5px;background:#8aa0b0"></div><div style="left:336px;top:61px;width:16px;height:207px;background:linear-gradient(90deg,#e8e8e8,#f4f4f4 40%,#f0f0f0)"></div><svg style="left:341px;top:68px;" width="8" height="5" viewBox="0 0 8 5"><path d="M0.5 4.5 L4 1 L7.5 4.5 Z" fill="#505050"/></svg><div style="left:336px;top:78.5px;width:14px;height:143px;border:1px solid #a8a8a8;border-radius:2px;box-sizing:border-box;background:linear-gradient(90deg,#ffffff,#e8e8e8 60%,#c8c8c8)"></div><svg style="left:339px;top:147px;" width="8" height="6" viewBox="0 0 8 6"><path d="M0 0.5 H7 M0 2.5 H7 M0 4.5 H7" stroke="#707070" stroke-width="1"/></svg><svg style="left:341px;top:257px;" width="8" height="5" viewBox="0 0 8 5"><path d="M0.5 0.5 L4 4 L7.5 0.5 Z" fill="#505050"/></svg><div style="left:1px;top:268px;width:351px;height:16px;background:linear-gradient(#e4e4e4,#f2f2f2 40%,#f0f0f0)"></div><svg style="left:7px;top:272.5px;" width="5" height="8" viewBox="0 0 5 8"><path d="M4.5 0.5 L1 4 L4.5 7.5 Z" fill="#505050"/></svg><div style="left:18.5px;top:269.5px;width:89.5px;height:13px;border:1px solid #8e8f8f;border-radius:2px;box-sizing:border-box;background:linear-gradient(#ffffff,#e6e6e6 60%,#cfcfcf)"></div><svg style="left:59px;top:272.5px;" width="8" height="8" viewBox="0 0 8 8"><path d="M1 0 V7 M3.5 0 V7 M6 0 V7" stroke="#505050" stroke-width="1"/></svg><svg style="left:325.5px;top:272.5px;" width="5" height="8" viewBox="0 0 5 8"><path d="M0.5 0.5 L4 4 L0.5 7.5 Z" fill="#505050"/></svg><div style="left:336px;top:268px;width:16px;height:16px;background:#f0f0f0"></div><div style="left:0px;top:284px;width:353px;height:1px;background:#a0a0a0"></div><div style="left:0px;top:284px;width:84px;height:24px;background:#fff;border:1px solid #a0a0a0;border-top:none;box-sizing:border-box"></div><svg style="left:11px;top:289.5px;" width="15" height="14" viewBox="0 0 15 14"><defs><linearGradient id="wg" x1="0" y1="0" x2="1" y2="0"><stop offset="0" stop-color="#ffe040"/><stop offset="0.6" stop-color="#f5b800"/><stop offset="1" stop-color="#a06000"/></linearGradient></defs><path d="M6.5 0.8 L0.5 12.8 L10.5 12.8 L14.2 9.5 Z" fill="url(#wg)" stroke="#9a8a60" stroke-width="0.6"/><rect x="6" y="4" width="1.2" height="1.6" fill="#e0203a"/><rect x="6" y="5.8" width="1.2" height="1.6" fill="#304070"/><rect x="4.7" y="7.5" width="1.2" height="1.6" fill="#304070"/><rect x="7.3" y="7.5" width="1.2" height="1.6" fill="#304070"/><rect x="3.5" y="9.6" width="1.2" height="1.6" fill="#304070"/><rect x="6" y="9.6" width="1.2" height="1.6" fill="#e0203a"/><rect x="8.5" y="9.6" width="1.2" height="1.6" fill="#304070"/></svg><div class="t" style="left:28.5px;top:293px;letter-spacing:-0.074px;">Hierarchy</div><div style="left:84px;top:287px;width:59px;height:20px;background:linear-gradient(#f2f2f2,#e2e2e2 50%,#d8d8d8);border:1px solid #a8a8a8;border-left:none;box-sizing:border-box"></div><div class="t" style="left:111.5px;top:292.5px;letter-spacing:-0.353px;">Files</div><svg style="left:95px;top:288.5px;" width="12" height="15" viewBox="0 0 12 15"><path d="M0.5 0.5 H8.5 L11 3 V14 H0.5 Z" fill="#eef2fc" stroke="#5070b8"/><path d="M2 3 H8 M2 5.5 H9.5 M2 8 H9.5 M2 10.5 H9.5 M2 12.5 H9.5" stroke="#3048b8" stroke-width="1.1"/></svg><div style="left:143px;top:287px;width:94px;height:20px;background:linear-gradient(#f2f2f2,#e2e2e2 50%,#d8d8d8);border:1px solid #a8a8a8;border-left:none;box-sizing:border-box"></div><div class="t" style="left:170.5px;top:292.5px;letter-spacing:-0.190px;">Design Units</div><svg style="left:154px;top:289.5px;" width="12" height="12" viewBox="0 0 12 12"><rect x="6" y="0.5" width="5" height="5" fill="#6a9ae0" stroke="#4060a0" stroke-width="0.7"/><rect x="3" y="3.5" width="5" height="4" fill="#f0e040" stroke="#a09040" stroke-width="0.7"/><rect x="0.5" y="6.5" width="5" height="5" fill="#fff" stroke="#6080b0" stroke-width="0.7"/></svg><div style="left:237px;top:287px;width:88px;height:20px;background:linear-gradient(#f2f2f2,#e2e2e2 50%,#d8d8d8);border:1px solid #a8a8a8;border-left:none;box-sizing:border-box"></div><div class="t" style="left:265.5px;top:292.5px;">IP Componen</div><svg style="left:247px;top:288.5px;" width="14" height="14" viewBox="0 0 14 14"><path d="M5 5 L12.5 12.5" stroke="#3060c0" stroke-width="1.8"/><path d="M5 5 L8 8" stroke="#f0c020" stroke-width="1.8"/><circle cx="2" cy="3" r="0.9" fill="#f05030"/><circle cx="5" cy="1" r="0.9" fill="#f08030"/><circle cx="8" cy="2.5" r="0.9" fill="#f05030"/><circle cx="1" cy="6.5" r="0.9" fill="#f0a030"/></svg><div style="left:325px;top:286px;width:14px;height:22px;background:linear-gradient(#f8f8f8,#e4e4e4);border:1px solid #c0c0c0;box-sizing:border-box"></div><svg style="left:328px;top:292px;" width="6" height="10" viewBox="0 0 6 10"><path d="M5 0.5 L1 5 L5 9.5 Z" fill="#c0c0c0"/></svg><div style="left:339px;top:286px;width:14px;height:22px;background:linear-gradient(#f8f8f8,#e4e4e4);border:1px solid #a0a0a0;box-sizing:border-box"></div><svg style="left:342px;top:292px;" width="7" height="10" viewBox="0 0 7 10"><path d="M1 0.5 L6 5 L1 9.5 Z" fill="#000"/></svg><div style="left:352px;top:60px;width:1px;height:248px;background:#a0a0a0"></div><div style="left:3px;top:314px;width:350px;height:16px;border:1px solid #b0b0b0;border-radius:1px;box-sizing:border-box;background:#f0f0f0"></div><div class="t" style="left:5px;top:319px;letter-spacing:-0.190px;">Tasks</div><svg style="left:316px;top:317px;" width="8" height="9" viewBox="0 0 8 9"><path d="M1.5 0.5 H6 V5.5 H1.5 Z M0 5.5 H7.5 M3.8 5.5 V9" fill="none" stroke="#333" stroke-width="1"/><path d="M1.5 0.5 H3 V5.5 H1.5 Z" fill="#8090a0"/></svg><svg style="left:327px;top:318px;" width="8" height="8" viewBox="0 0 8 8"><rect x="2.5" y="0.5" width="5" height="4.5" fill="none" stroke="#111" stroke-width="1"/><rect x="0.5" y="3" width="5" height="4.5" fill="#fff" stroke="#111" stroke-width="1"/><path d="M2.5 1.3 H7.5 M0.5 3.8 H5.5" stroke="#111" stroke-width="1.4"/></svg><svg style="left:340px;top:318px;" width="8" height="8" viewBox="0 0 8 8"><path d="M0.8 0.8 L7.2 7.2 M7.2 0.8 L0.8 7.2" stroke="#111" stroke-width="1.5"/></svg><div class="t" style="left:0.7px;top:342px;letter-spacing:0.022px;">Flow:</div><div style="left:30px;top:336px;width:250px;height:20px;border:1px solid #8e8f8f;border-radius:3px;box-sizing:border-box;background:linear-gradient(#f4f4f4,#e8e8e8 50%,#dcdcdc)"></div><div class="t" style="left:33.3px;top:342px;letter-spacing:-0.266px;">Full Design</div><svg style="left:267px;top:343px;" width="9" height="6" viewBox="0 0 9 6"><path d="M0.5 0.5 H8.5 L4.5 5 Z" fill="#111"/></svg><div style="left:286.5px;top:337px;width:67px;height:19px;border:1px solid #8e8f8f;border-radius:3px;box-sizing:border-box;background:linear-gradient(#f4f4f4,#e8e8e8 50%,#dcdcdc)"></div><div class="t" style="left:291.7px;top:342px;letter-spacing:0.082px;">Customize...</div><div style="left:0px;top:363px;width:354px;height:165px;border:1px solid #a0a0a0;box-sizing:border-box;background:#fff"></div><div style="left:1px;top:364px;width:338px;height:20px;background:linear-gradient(#ffffff 40%,#f2f3f6 50%,#eef0f3)"></div><div style="left:1px;top:384px;width:338px;height:1px;background:#e2e2e2"></div><div style="left:37px;top:364px;width:1px;height:148px;background:#e6e6e6"></div><div style="left:276px;top:364px;width:1px;height:148px;background:#e6e6e6"></div><div class="t" style="left:147.3px;top:370px;letter-spacing:-0.387px;">Task</div><svg style="left:283px;top:368px;" width="10" height="13" viewBox="0 0 10 13"><defs><radialGradient id="sw" cx="0.35" cy="0.35" r="0.8"><stop offset="0" stop-color="#ffffff"/><stop offset="1" stop-color="#6a8fd8"/></radialGradient></defs><rect x="3.5" y="0.5" width="3" height="2" fill="#7090c8"/><ellipse cx="5" cy="7.5" rx="4.3" ry="5" fill="url(#sw)" stroke="#5a78b8" stroke-width="0.8"/><path d="M5 4 V8" stroke="#3a5aa0" stroke-width="1"/></svg><div class="t" style="left:319.5px;top:370px;">Time</div><div style="left:1px;top:403.0px;width:338px;height:1px;background:#e6e6e6"></div><div style="left:1px;top:421.33px;width:338px;height:1px;background:#e6e6e6"></div><div style="left:1px;top:439.66px;width:338px;height:1px;background:#e6e6e6"></div><div style="left:1px;top:457.99px;width:338px;height:1px;background:#e6e6e6"></div><div style="left:1px;top:476.32px;width:338px;height:1px;background:#e6e6e6"></div><div style="left:1px;top:494.65px;width:338px;height:1px;background:#e6e6e6"></div><div style="left:1px;top:512.98px;width:338px;height:1px;background:#e6e6e6"></div><svg style="left:46px;top:390.5px;" width="6" height="9" viewBox="0 0 6 9"><path d="M0.8 0.8 L4.8 4.5 L0.8 8.2 Z" fill="#fff" stroke="#8a8a8a" stroke-width="0.9"/></svg><svg style="left:60px;top:388.5px;" width="14" height="13" viewBox="0 0 14 13"><defs><linearGradient id="fg" x1="0" y1="0" x2="0" y2="1"><stop offset="0" stop-color="#fff4a8"/><stop offset="1" stop-color="#f2c428"/></linearGradient></defs><path d="M0.5 2.5 V12 H13 V3.5 H6.5 L5.5 1 H1.5 Z" fill="#f4dc70" stroke="#a89040" stroke-width="0.8"/><rect x="0.5" y="4" width="12.5" height="8" fill="url(#fg)" stroke="#b09a48" stroke-width="0.8"/></svg><div class="t" style="left:78.2px;top:391.5px;letter-spacing:0.080px;color:#111">Start Project</div><svg style="left:46px;top:408.8px;" width="6" height="9" viewBox="0 0 6 9"><path d="M0.8 0.8 L4.8 4.5 L0.8 8.2 Z" fill="#fff" stroke="#8a8a8a" stroke-width="0.9"/></svg><svg style="left:60px;top:406.8px;" width="14" height="13" viewBox="0 0 14 13"><defs><linearGradient id="fg" x1="0" y1="0" x2="0" y2="1"><stop offset="0" stop-color="#fff4a8"/><stop offset="1" stop-color="#f2c428"/></linearGradient></defs><path d="M0.5 2.5 V12 H13 V3.5 H6.5 L5.5 1 H1.5 Z" fill="#f4dc70" stroke="#a89040" stroke-width="0.8"/><rect x="0.5" y="4" width="12.5" height="8" fill="url(#fg)" stroke="#b09a48" stroke-width="0.8"/></svg><div class="t" style="left:78.2px;top:409.83px;letter-spacing:-0.030px;color:#111">Create Design</div><svg style="left:46px;top:427.2px;" width="6" height="9" viewBox="0 0 6 9"><path d="M0.8 0.8 L4.8 4.5 L0.8 8.2 Z" fill="#fff" stroke="#8a8a8a" stroke-width="0.9"/></svg><svg style="left:60px;top:425.2px;" width="14" height="13" viewBox="0 0 14 13"><defs><linearGradient id="fg" x1="0" y1="0" x2="0" y2="1"><stop offset="0" stop-color="#fff4a8"/><stop offset="1" stop-color="#f2c428"/></linearGradient></defs><path d="M0.5 2.5 V12 H13 V3.5 H6.5 L5.5 1 H1.5 Z" fill="#f4dc70" stroke="#a89040" stroke-width="0.8"/><rect x="0.5" y="4" width="12.5" height="8" fill="url(#fg)" stroke="#b09a48" stroke-width="0.8"/></svg><div class="t" style="left:78.2px;top:428.16px;letter-spacing:-0.098px;color:#111">Assign Constraints</div><svg style="left:45px;top:447.5px;" width="6" height="6" viewBox="0 0 6 6"><path d="M5.5 0.5 L5.5 5.5 L0.5 5.5 Z" fill="#2b2b2b"/></svg><svg style="left:60px;top:444.0px;" width="12" height="12" viewBox="0 0 12 12"><defs><linearGradient id="pg60444.0" x1="0" y1="0" x2="1" y2="1"><stop offset="0" stop-color="#c060d0"/><stop offset="1" stop-color="#6040b0"/></linearGradient></defs><path d="M1 0.5 L11 6 L1 11.5 Z" fill="url(#pg60444.0)"/></svg><div class="t" style="left:78.2px;top:446.49px;letter-spacing:-0.279px;color:#111">Compile Design</div><svg style="left:64px;top:463.8px;" width="6" height="9" viewBox="0 0 6 9"><path d="M0.8 0.8 L4.8 4.5 L0.8 8.2 Z" fill="#fff" stroke="#8a8a8a" stroke-width="0.9"/></svg><svg style="left:79px;top:462.3px;" width="12" height="12" viewBox="0 0 12 12"><defs><linearGradient id="pg79462.3" x1="0" y1="0" x2="1" y2="1"><stop offset="0" stop-color="#7070e8"/><stop offset="1" stop-color="#4040b0"/></linearGradient></defs><path d="M1 0.5 L11 6 L1 11.5 Z" fill="url(#pg79462.3)"/></svg><div style="left:75.5px;top:459.8px;width:113px;height:17px;background:linear-gradient(#f6f6f6,#ebebeb);border:1px solid #e4e4e4;border-radius:2px;box-sizing:border-box"></div><svg style="left:79px;top:462.3px;" width="12" height="12" viewBox="0 0 12 12"><defs><linearGradient id="pg79462.3" x1="0" y1="0" x2="1" y2="1"><stop offset="0" stop-color="#8080f0"/><stop offset="1" stop-color="#4040b0"/></linearGradient></defs><path d="M1 0.5 L11 6 L1 11.5 Z" fill="url(#pg79462.3)"/></svg><div class="t" style="left:96.7px;top:464.82px;letter-spacing:-0.132px;color:#2a8a2a">Analysis &amp; Synthesis</div><svg style="left:64px;top:482.1px;" width="6" height="9" viewBox="0 0 6 9"><path d="M0.8 0.8 L4.8 4.5 L0.8 8.2 Z" fill="#fff" stroke="#8a8a8a" stroke-width="0.9"/></svg><svg style="left:79px;top:480.6px;" width="12" height="12" viewBox="0 0 12 12"><defs><linearGradient id="pg79480.6" x1="0" y1="0" x2="1" y2="1"><stop offset="0" stop-color="#c060d0"/><stop offset="1" stop-color="#6040b0"/></linearGradient></defs><path d="M1 0.5 L11 6 L1 11.5 Z" fill="url(#pg79480.6)"/></svg><div class="t" style="left:96.7px;top:483.15px;letter-spacing:-0.020px;color:#d4a020">Fitter (Place &amp; Route)</div><svg style="left:64px;top:500.5px;" width="6" height="9" viewBox="0 0 6 9"><path d="M0.8 0.8 L4.8 4.5 L0.8 8.2 Z" fill="#fff" stroke="#8a8a8a" stroke-width="0.9"/></svg><svg style="left:79px;top:499.0px;" width="12" height="12" viewBox="0 0 12 12"><defs><linearGradient id="pg79499.0" x1="0" y1="0" x2="1" y2="1"><stop offset="0" stop-color="#c060d0"/><stop offset="1" stop-color="#6040b0"/></linearGradient></defs><path d="M1 0.5 L11 6 L1 11.5 Z" fill="url(#pg79499.0)"/></svg><div class="t" style="left:96.7px;top:501.48px;letter-spacing:-0.119px;color:#d4a020">Assembler (Generate programming files)</div><div class="t" style="left:278.7px;top:464.82px;letter-spacing:0.177px;color:#2a8a2a">00:00:05</div><svg style="left:4px;top:462px;" width="14" height="12" viewBox="0 0 14 12"><path d="M1 6 L5 10 L13 1.5" fill="none" stroke="#4a9a48" stroke-width="3"/><path d="M1.5 5.5 L5 9 L12.5 1.5" fill="none" stroke="#70c070" stroke-width="1.2"/></svg><div class="t" style="left:7px;top:481.65px;color:#efc860;font-size:16px;font-family:'Liberation Serif',serif;font-weight:bold">?</div><div class="t" style="left:7px;top:499.98px;color:#efc860;font-size:16px;font-family:'Liberation Serif',serif;font-weight:bold">?</div><div style="left:339px;top:364px;width:14px;height:148px;background:linear-gradient(90deg,#e8e8e8,#f4f4f4 40%,#f0f0f0)"></div><svg style="left:342.5px;top:370px;" width="8" height="5" viewBox="0 0 8 5"><path d="M0.5 4.5 L4 1 L7.5 4.5 Z" fill="#505050"/></svg><div style="left:339.5px;top:380.5px;width:13.5px;height:52px;border:1px solid #a8a8a8;border-radius:2px;box-sizing:border-box;background:linear-gradient(90deg,#ffffff,#e8e8e8 60%,#c8c8c8)"></div><svg style="left:342px;top:403px;" width="8" height="6" viewBox="0 0 8 6"><path d="M0 0.5 H7 M0 2.5 H7 M0 4.5 H7" stroke="#707070" stroke-width="1"/></svg><svg style="left:342.5px;top:502.5px;" width="8" height="5" viewBox="0 0 8 5"><path d="M0.5 0.5 L4 4 L7.5 0.5 Z" fill="#505050"/></svg><div style="left:1px;top:512px;width:352px;height:15px;background:linear-gradient(#e4e4e4,#f2f2f2 40%,#f0f0f0)"></div><svg style="left:7px;top:516px;" width="5" height="8" viewBox="0 0 5 8"><path d="M4.5 0.5 L1 4 L4.5 7.5 Z" fill="#505050"/></svg><div style="left:18.5px;top:513px;width:277px;height:13px;border:1px solid #8e8f8f;border-radius:2px;box-sizing:border-box;background:linear-gradient(#ffffff,#e6e6e6 60%,#cfcfcf)"></div><svg style="left:152px;top:516px;" width="8" height="8" viewBox="0 0 8 8"><path d="M1 0 V7 M3.5 0 V7 M6 0 V7" stroke="#505050" stroke-width="1"/></svg><svg style="left:328.5px;top:516px;" width="5" height="8" viewBox="0 0 5 8"><path d="M0.5 0.5 L4 4 L0.5 7.5 Z" fill="#505050"/></svg><div style="left:3px;top:534.5px;width:350px;height:16px;border:1px solid #b0b0b0;border-radius:1px;box-sizing:border-box;background:#f0f0f0"></div><div class="t" style="left:5px;top:539.5px;letter-spacing:0.030px;">Status</div><svg style="left:316px;top:537.5px;" width="8" height="9" viewBox="0 0 8 9"><path d="M1.5 0.5 H6 V5.5 H1.5 Z M0 5.5 H7.5 M3.8 5.5 V9" fill="none" stroke="#333" stroke-width="1"/><path d="M1.5 0.5 H3 V5.5 H1.5 Z" fill="#8090a0"/></svg><svg style="left:327px;top:538.5px;" width="8" height="8" viewBox="0 0 8 8"><rect x="2.5" y="0.5" width="5" height="4.5" fill="none" stroke="#111" stroke-width="1"/><rect x="0.5" y="3" width="5" height="4.5" fill="#fff" stroke="#111" stroke-width="1"/><path d="M2.5 1.3 H7.5 M0.5 3.8 H5.5" stroke="#111" stroke-width="1.4"/></svg><svg style="left:340px;top:538.5px;" width="8" height="8" viewBox="0 0 8 8"><path d="M0.8 0.8 L7.2 7.2 M7.2 0.8 L0.8 7.2" stroke="#111" stroke-width="1.5"/></svg><div style="left:0px;top:553px;width:354px;height:50px;border:1px solid #a0a0a0;box-sizing:border-box;background:#fff"></div><div style="left:1px;top:554px;width:352px;height:19px;background:linear-gradient(#ffffff 40%,#f2f3f6 50%,#eef0f3)"></div><div style="left:1px;top:573px;width:352px;height:1px;background:#e2e2e2"></div><div style="left:128.5px;top:554px;width:1px;height:19px;background:#e6e6e6"></div><div style="left:220px;top:554px;width:1px;height:19px;background:#e6e6e6"></div><div class="t" style="left:48.2px;top:560px;letter-spacing:-0.427px;">Module</div><svg style="left:134px;top:557px;" width="13" height="13" viewBox="0 0 13 13"><path d="M10.5 1 L3 12" stroke="#5474d0" stroke-width="1.4"/><ellipse cx="4.2" cy="4" rx="2" ry="2.3" fill="none" stroke="#5474d0" stroke-width="1.2" transform="skewX(-12) translate(1 0)"/><ellipse cx="9.2" cy="9.2" rx="2" ry="2.3" fill="none" stroke="#5474d0" stroke-width="1.2" transform="skewX(-12) translate(2 0)"/></svg><div class="t" style="left:162.2px;top:560px;letter-spacing:-0.159px;">Progress</div><svg style="left:226px;top:557px;" width="10" height="13" viewBox="0 0 10 13"><defs><radialGradient id="sw" cx="0.35" cy="0.35" r="0.8"><stop offset="0" stop-color="#ffffff"/><stop offset="1" stop-color="#6a8fd8"/></radialGradient></defs><rect x="3.5" y="0.5" width="3" height="2" fill="#7090c8"/><ellipse cx="5" cy="7.5" rx="4.3" ry="5" fill="url(#sw)" stroke="#5a78b8" stroke-width="0.8"/><path d="M5 4 V8" stroke="#3a5aa0" stroke-width="1"/></svg><div class="t" style="left:284px;top:560px;letter-spacing:-0.600px;">Time</div><div class="t" style="left:3.2px;top:579px;letter-spacing:-0.159px;">Analysis &amp; Synthesis</div><div style="left:129px;top:576px;width:90.5px;height:14px;border:1px solid #a8a8b0;border-radius:2px;box-sizing:border-box;background:#000090;box-shadow:inset 0 0 0 1px #3030a0"></div><div class="t" style="left:159.6px;top:579px;letter-spacing:0.600px;color:#fff;font-weight:bold">100%</div><div class="t" style="left:222.7px;top:579px;letter-spacing:0.177px;">00:00:05</div><div style="left:1px;top:589.5px;width:352px;height:1px;background:#e6e6e6"></div><div style="left:358px;top:62px;width:722px;height:1px;background:#a0a0a0"></div><div style="left:360px;top:43px;width:134.5px;height:19.5px;background:linear-gradient(#f8f8f8,#ececec 50%,#dedede);border:1px solid #a0a0a0;border-bottom:none;box-sizing:border-box"></div><svg style="left:368.5px;top:44px;" width="16" height="16" viewBox="0 0 16 16"><defs><linearGradient id="ag" x1="0" y1="0" x2="0" y2="1"><stop offset="0" stop-color="#b8d0f4"/><stop offset="1" stop-color="#4a78d0"/></linearGradient></defs><path d="M8 0.5 L15.5 8 L8 15.5 L0.5 8 Z" fill="url(#ag)"/><path d="M1 8.5 L8 15.3 L15 8.5" fill="none" stroke="#151515" stroke-width="1.6" stroke-dasharray="1.2 0.6"/><text x="0.2" y="9.6" font-family="Liberation Sans" font-weight="bold" font-size="8.6" fill="#f0b028" stroke="#b07810" stroke-width="0.3" textLength="15.4" lengthAdjust="spacingAndGlyphs">abc</text></svg><div class="t" style="left:386.5px;top:49.5px;letter-spacing:-0.176px;">Snake_Game.vhd</div><svg style="left:468.5px;top:47px;" width="13" height="13" viewBox="0 0 13 13"><rect x="0.5" y="0.5" width="12" height="12" rx="2" fill="#d8d8d8" stroke="#c0c0c0"/><path d="M4 4 L9 9 M9 4 L4 9" stroke="#fff" stroke-width="1.8"/></svg><div style="left:494.5px;top:43px;width:164.0px;height:19.5px;background:linear-gradient(#f8f8f8,#ececec 50%,#dedede);border:1px solid #a0a0a0;border-bottom:none;box-sizing:border-box"></div><svg style="left:505.0px;top:44px;" width="16" height="16" viewBox="0 0 16 16"><defs><linearGradient id="ag" x1="0" y1="0" x2="0" y2="1"><stop offset="0" stop-color="#b8d0f4"/><stop offset="1" stop-color="#4a78d0"/></linearGradient></defs><path d="M8 0.5 L15.5 8 L8 15.5 L0.5 8 Z" fill="url(#ag)"/><path d="M1 8.5 L8 15.3 L15 8.5" fill="none" stroke="#151515" stroke-width="1.6" stroke-dasharray="1.2 0.6"/><text x="0.2" y="9.6" font-family="Liberation Sans" font-weight="bold" font-size="8.6" fill="#f0b028" stroke="#b07810" stroke-width="0.3" textLength="15.4" lengthAdjust="spacingAndGlyphs">abc</text></svg><div class="t" style="left:523px;top:49.5px;letter-spacing:-0.132px;">Game_State_Signal.vhd</div><svg style="left:632.5px;top:47px;" width="13" height="13" viewBox="0 0 13 13"><rect x="0.5" y="0.5" width="12" height="12" rx="2" fill="#d8d8d8" stroke="#c0c0c0"/><path d="M4 4 L9 9 M9 4 L4 9" stroke="#fff" stroke-width="1.8"/></svg><div style="left:658.5px;top:43px;width:135.0px;height:19.5px;background:linear-gradient(#f8f8f8,#ececec 50%,#dedede);border:1px solid #a0a0a0;border-bottom:none;box-sizing:border-box"></div><svg style="left:669.0px;top:44px;" width="16" height="16" viewBox="0 0 16 16"><defs><linearGradient id="ag" x1="0" y1="0" x2="0" y2="1"><stop offset="0" stop-color="#b8d0f4"/><stop offset="1" stop-color="#4a78d0"/></linearGradient></defs><path d="M8 0.5 L15.5 8 L8 15.5 L0.5 8 Z" fill="url(#ag)"/><path d="M1 8.5 L8 15.3 L15 8.5" fill="none" stroke="#151515" stroke-width="1.6" stroke-dasharray="1.2 0.6"/><text x="0.2" y="9.6" font-family="Liberation Sans" font-weight="bold" font-size="8.6" fill="#f0b028" stroke="#b07810" stroke-width="0.3" textLength="15.4" lengthAdjust="spacingAndGlyphs">abc</text></svg><div class="t" style="left:701px;top:49.5px;letter-spacing:0.163px;">Snake.vhd</div><svg style="left:767.5px;top:47px;" width="13" height="13" viewBox="0 0 13 13"><rect x="0.5" y="0.5" width="12" height="12" rx="2" fill="#d8d8d8" stroke="#c0c0c0"/><path d="M4 4 L9 9 M9 4 L4 9" stroke="#fff" stroke-width="1.8"/></svg><div style="left:793.5px;top:43px;width:135.0px;height:19.5px;background:linear-gradient(#f8f8f8,#ececec 50%,#dedede);border:1px solid #a0a0a0;border-bottom:none;box-sizing:border-box"></div><svg style="left:804.0px;top:44px;" width="16" height="16" viewBox="0 0 16 16"><defs><linearGradient id="ag" x1="0" y1="0" x2="0" y2="1"><stop offset="0" stop-color="#b8d0f4"/><stop offset="1" stop-color="#4a78d0"/></linearGradient></defs><path d="M8 0.5 L15.5 8 L8 15.5 L0.5 8 Z" fill="url(#ag)"/><path d="M1 8.5 L8 15.3 L15 8.5" fill="none" stroke="#151515" stroke-width="1.6" stroke-dasharray="1.2 0.6"/><text x="0.2" y="9.6" font-family="Liberation Sans" font-weight="bold" font-size="8.6" fill="#f0b028" stroke="#b07810" stroke-width="0.3" textLength="15.4" lengthAdjust="spacingAndGlyphs">abc</text></svg><div class="t" style="left:822.5px;top:49.5px;letter-spacing:0.040px;">Snake_grow.vhd</div><svg style="left:902.5px;top:47px;" width="13" height="13" viewBox="0 0 13 13"><rect x="0.5" y="0.5" width="12" height="12" rx="2" fill="#d8d8d8" stroke="#c0c0c0"/><path d="M4 4 L9 9 M9 4 L4 9" stroke="#fff" stroke-width="1.8"/></svg><div style="left:928.5px;top:43px;width:136.0px;height:19.5px;background:linear-gradient(#f8f8f8,#ececec 50%,#dedede);border:1px solid #a0a0a0;border-bottom:none;box-sizing:border-box"></div><svg style="left:938.5px;top:44px;" width="16" height="16" viewBox="0 0 16 16"><defs><linearGradient id="ag" x1="0" y1="0" x2="0" y2="1"><stop offset="0" stop-color="#b8d0f4"/><stop offset="1" stop-color="#4a78d0"/></linearGradient></defs><path d="M8 0.5 L15.5 8 L8 15.5 L0.5 8 Z" fill="url(#ag)"/><path d="M1 8.5 L8 15.3 L15 8.5" fill="none" stroke="#151515" stroke-width="1.6" stroke-dasharray="1.2 0.6"/><text x="0.2" y="9.6" font-family="Liberation Sans" font-weight="bold" font-size="8.6" fill="#f0b028" stroke="#b07810" stroke-width="0.3" textLength="15.4" lengthAdjust="spacingAndGlyphs">abc</text></svg><div class="t" style="left:970px;top:49.5px;letter-spacing:0.187px;">display.vhd</div><svg style="left:1038.5px;top:47px;" width="13" height="13" viewBox="0 0 13 13"><rect x="0.5" y="0.5" width="12" height="12" rx="2" fill="#d8d8d8" stroke="#c0c0c0"/><path d="M4 4 L9 9 M9 4 L4 9" stroke="#fff" stroke-width="1.8"/></svg><div style="left:1064.5px;top:43px;width:35.5px;height:19.5px;background:linear-gradient(#f8f8f8,#ececec 50%,#dedede);border:1px solid #a0a0a0;border-bottom:none;box-sizing:border-box"></div><svg style="left:1074.5px;top:44px;" width="16" height="16" viewBox="0 0 16 16"><defs><linearGradient id="ag" x1="0" y1="0" x2="0" y2="1"><stop offset="0" stop-color="#b8d0f4"/><stop offset="1" stop-color="#4a78d0"/></linearGradient></defs><path d="M8 0.5 L15.5 8 L8 15.5 L0.5 8 Z" fill="url(#ag)"/><path d="M1 8.5 L8 15.3 L15 8.5" fill="none" stroke="#151515" stroke-width="1.6" stroke-dasharray="1.2 0.6"/><text x="0.2" y="9.6" font-family="Liberation Sans" font-weight="bold" font-size="8.6" fill="#f0b028" stroke="#b07810" stroke-width="0.3" textLength="15.4" lengthAdjust="spacingAndGlyphs">abc</text></svg><div class="t" style="left:1090px;top:49.5px;"></div><svg style="left:1120px;top:47px;" width="13" height="13" viewBox="0 0 13 13"><rect x="0.5" y="0.5" width="12" height="12" rx="2" fill="#d8d8d8" stroke="#c0c0c0"/><path d="M4 4 L9 9 M9 4 L4 9" stroke="#fff" stroke-width="1.8"/></svg><div style="left:361px;top:65px;width:187px;height:16px;border:1px solid #b0b0b0;border-radius:1px;box-sizing:border-box;background:#f0f0f0"></div><div class="t" style="left:363.4px;top:70px;letter-spacing:0.067px;">Table of Contents</div><svg style="left:525px;top:68px;" width="8" height="9" viewBox="0 0 8 9"><path d="M1.5 0.5 H6 V5.5 H1.5 Z M0 5.5 H7.5 M3.8 5.5 V9" fill="none" stroke="#333" stroke-width="1"/><path d="M1.5 0.5 H3 V5.5 H1.5 Z" fill="#8090a0"/></svg><svg style="left:536px;top:69px;" width="8" height="8" viewBox="0 0 8 8"><rect x="2.5" y="0.5" width="5" height="4.5" fill="none" stroke="#111" stroke-width="1"/><rect x="0.5" y="3" width="5" height="4.5" fill="#fff" stroke="#111" stroke-width="1"/><path d="M2.5 1.3 H7.5 M0.5 3.8 H5.5" stroke="#111" stroke-width="1.4"/></svg><div style="left:358px;top:83px;width:192px;height:520px;border:1px solid #a0a4ac;box-sizing:border-box;background:#fff"></div><div style="left:378px;top:85px;width:88px;height:16.5px;background:linear-gradient(#f6f6f6,#ebebeb);border:1px solid #e2e2e2;border-radius:2px;box-sizing:border-box"></div><div class="t" style="left:399.4px;top:89.5px;letter-spacing:-0.252px;">Flow Summary</div><svg style="left:379.5px;top:87.0px;" width="15" height="13" viewBox="0 0 15 13"><defs><linearGradient id="tsel" x1="0" y1="0" x2="0" y2="1"><stop offset="0" stop-color="#c8dcf8"/><stop offset="1" stop-color="#6e9ad8"/></linearGradient></defs><rect x="0.5" y="0.5" width="14" height="12" fill="url(#tsel)" stroke="#4a72b0" stroke-width="0.9"/><rect x="1" y="1" width="13" height="2.6" fill="#9a68d8"/><path d="M1.5 5 H6.5 M8.5 5 H13.5 M1.5 7.5 H6.5 M8.5 7.5 H13.5 M1.5 10 H6.5 M8.5 10 H13.5" stroke="#eef4ff" stroke-width="1.3"/></svg><div class="t" style="left:399.4px;top:107.83px;letter-spacing:-0.085px;">Flow Settings</div><svg style="left:379.5px;top:105.8px;" width="16" height="12" viewBox="0 0 16 12"><defs><linearGradient id="tdk" x1="0" y1="0" x2="0" y2="1"><stop offset="0" stop-color="#4a68d8"/><stop offset="1" stop-color="#020a40"/></linearGradient></defs><rect x="0.5" y="0.5" width="15" height="11" fill="#7888a8" stroke="#5a6a88" stroke-width="0.8"/><rect x="0.5" y="0.5" width="15" height="3.5" fill="url(#tdk)"/><path d="M1.5 6.3 H5 M6.5 6.3 H9.5 M11 6.3 H14.5 M1.5 9.3 H5 M6.5 9.3 H9.5 M11 9.3 H14.5" stroke="#ffffff" stroke-width="1.6"/></svg><div class="t" style="left:399.4px;top:126.16px;letter-spacing:-0.105px;">Flow Non-Default Global Settings</div><svg style="left:379.5px;top:124.2px;" width="16" height="12" viewBox="0 0 16 12"><defs><linearGradient id="tdk" x1="0" y1="0" x2="0" y2="1"><stop offset="0" stop-color="#4a68d8"/><stop offset="1" stop-color="#020a40"/></linearGradient></defs><rect x="0.5" y="0.5" width="15" height="11" fill="#7888a8" stroke="#5a6a88" stroke-width="0.8"/><rect x="0.5" y="0.5" width="15" height="3.5" fill="url(#tdk)"/><path d="M1.5 6.3 H5 M6.5 6.3 H9.5 M11 6.3 H14.5 M1.5 9.3 H5 M6.5 9.3 H9.5 M11 9.3 H14.5" stroke="#ffffff" stroke-width="1.6"/></svg><div class="t" style="left:399.4px;top:144.49px;letter-spacing:-0.325px;">Flow Elapsed Time</div><svg style="left:379.5px;top:142.5px;" width="16" height="12" viewBox="0 0 16 12"><defs><linearGradient id="tdk" x1="0" y1="0" x2="0" y2="1"><stop offset="0" stop-color="#4a68d8"/><stop offset="1" stop-color="#020a40"/></linearGradient></defs><rect x="0.5" y="0.5" width="15" height="11" fill="#7888a8" stroke="#5a6a88" stroke-width="0.8"/><rect x="0.5" y="0.5" width="15" height="3.5" fill="url(#tdk)"/><path d="M1.5 6.3 H5 M6.5 6.3 H9.5 M11 6.3 H14.5 M1.5 9.3 H5 M6.5 9.3 H9.5 M11 9.3 H14.5" stroke="#ffffff" stroke-width="1.6"/></svg><div class="t" style="left:399.4px;top:162.82px;letter-spacing:-0.350px;">Flow OS Summary</div><svg style="left:379.5px;top:160.8px;" width="16" height="12" viewBox="0 0 16 12"><defs><linearGradient id="tdk" x1="0" y1="0" x2="0" y2="1"><stop offset="0" stop-color="#4a68d8"/><stop offset="1" stop-color="#020a40"/></linearGradient></defs><rect x="0.5" y="0.5" width="15" height="11" fill="#7888a8" stroke="#5a6a88" stroke-width="0.8"/><rect x="0.5" y="0.5" width="15" height="3.5" fill="url(#tdk)"/><path d="M1.5 6.3 H5 M6.5 6.3 H9.5 M11 6.3 H14.5 M1.5 9.3 H5 M6.5 9.3 H9.5 M11 9.3 H14.5" stroke="#ffffff" stroke-width="1.6"/></svg><div class="t" style="left:399.4px;top:181.15px;letter-spacing:-0.216px;">Flow Log</div><svg style="left:382px;top:177.7px;" width="12" height="15" viewBox="0 0 12 15"><path d="M0.5 0.5 H8.5 L11 3 V14 H0.5 Z" fill="#eef2fc" stroke="#6070a8" stroke-width="0.9"/><path d="M8.5 0.5 V3 H11" fill="#c8d4f0" stroke="#8090b8" stroke-width="0.6"/><path d="M2 3 H7.5 M2 5.3 H9.5 M2 7.6 H9.5 M2 9.9 H9.5 M2 12.2 H9.5" stroke="#3040b0" stroke-width="1.1"/></svg><div class="t" style="left:399.4px;top:199.48px;letter-spacing:-0.159px;">Analysis &amp; Synthesis</div><svg style="left:381px;top:196.5px;" width="14" height="13" viewBox="0 0 14 13"><defs><linearGradient id="fg" x1="0" y1="0" x2="0" y2="1"><stop offset="0" stop-color="#fff4a8"/><stop offset="1" stop-color="#f2c428"/></linearGradient></defs><path d="M0.5 2.5 V12 H13 V3.5 H6.5 L5.5 1 H1.5 Z" fill="#f4dc70" stroke="#a89040" stroke-width="0.8"/><rect x="0.5" y="4" width="12.5" height="8" fill="url(#fg)" stroke="#b09a48" stroke-width="0.8"/></svg><svg style="left:368px;top:198.5px;" width="6" height="9" viewBox="0 0 6 9"><path d="M0.8 0.8 L4.8 4.5 L0.8 8.2 Z" fill="#fff" stroke="#8a8a8a" stroke-width="0.9"/></svg><div class="t" style="left:399.4px;top:217.81px;letter-spacing:-0.231px;">Flow Messages</div><svg style="left:381px;top:213.8px;" width="16" height="16" viewBox="0 0 16 16"><defs><radialGradient id="ig" cx="0.4" cy="0.3" r="0.75"><stop offset="0" stop-color="#ffffff"/><stop offset="1" stop-color="#b4cdf0"/></radialGradient></defs><path d="M8 0.6 C12.2 0.6 15.2 3.2 15.2 6.6 C15.2 9.4 13 11.4 10.2 12.2 L8 15.2 L5.8 12.2 C3 11.4 0.8 9.4 0.8 6.6 C0.8 3.2 3.8 0.6 8 0.6 Z" fill="url(#ig)" stroke="#7090c8" stroke-width="0.9"/><rect x="7.2" y="2.3" width="1.6" height="1.6" fill="#2a50c0"/><rect x="7.2" y="5" width="1.6" height="5.6" fill="#2a50c0"/></svg><div class="t" style="left:399.4px;top:236.14px;letter-spacing:-0.227px;">Flow Suppressed Messages</div><svg style="left:381px;top:232.1px;" width="16" height="16" viewBox="0 0 16 16"><defs><radialGradient id="ig" cx="0.4" cy="0.3" r="0.75"><stop offset="0" stop-color="#ffffff"/><stop offset="1" stop-color="#b4cdf0"/></radialGradient></defs><path d="M8 0.6 C12.2 0.6 15.2 3.2 15.2 6.6 C15.2 9.4 13 11.4 10.2 12.2 L8 15.2 L5.8 12.2 C3 11.4 0.8 9.4 0.8 6.6 C0.8 3.2 3.8 0.6 8 0.6 Z" fill="url(#ig)" stroke="#7090c8" stroke-width="0.9"/><rect x="7.2" y="2.3" width="1.6" height="1.6" fill="#2a50c0"/><rect x="7.2" y="5" width="1.6" height="5.6" fill="#2a50c0"/></svg><div style="left:554px;top:63.5px;width:526px;height:15.5px;background:#3399ff"></div><div class="t" style="left:556.3px;top:67px;letter-spacing:0.349px;color:#fff;font-weight:bold">Flow Summary</div><div style="left:554px;top:79px;width:526px;height:1px;background:#a0a4ac"></div><div style="left:554px;top:79px;width:1px;height:520px;background:#a0a4ac"></div><div class="t" style="left:556.9px;top:85.3px;letter-spacing:-0.104px;">Flow Status</div><div class="t" style="left:728.5px;top:85.3px;letter-spacing:-0.085px;">Successful - Mon Jun 16 23:35:44 2025</div><div class="t" style="left:556.9px;top:100.9px;letter-spacing:0.026px;">Quartus II 64-Bit Version</div><div class="t" style="left:729.6px;top:100.9px;letter-spacing:-0.138px;">13.0.1 Build 232 06/12/2013 SP 1 SJ Full Version</div><div class="t" style="left:556.9px;top:116.5px;letter-spacing:-0.353px;">Revision Name</div><div class="t" style="left:728.5px;top:116.5px;letter-spacing:-0.300px;">snake_game</div><div class="t" style="left:556.9px;top:132.1px;letter-spacing:-0.095px;">Top-level Entity Name</div><div class="t" style="left:728.5px;top:132.1px;letter-spacing:-0.300px;">snake_game</div><div class="t" style="left:556.9px;top:147.7px;letter-spacing:-0.469px;">Family</div><div class="t" style="left:728.5px;top:147.7px;letter-spacing:-0.248px;">Cyclone IV E</div><div class="t" style="left:556.9px;top:163.3px;letter-spacing:-0.381px;">Device</div><div class="t" style="left:728.5px;top:163.3px;letter-spacing:-0.600px;">EP4CE6F17C8</div><div class="t" style="left:556.9px;top:178.9px;letter-spacing:-0.337px;">Timing Models</div><div class="t" style="left:728.5px;top:178.9px;letter-spacing:-0.313px;">Final</div><div class="t" style="left:556.9px;top:194.5px;letter-spacing:-0.096px;">Total logic elements</div><div class="t" style="left:729.6px;top:194.5px;letter-spacing:-0.266px;">1,225</div><div class="t" style="left:575.2px;top:210.1px;letter-spacing:-0.022px;">Total combinational functions</div><div class="t" style="left:729.6px;top:210.1px;letter-spacing:-0.266px;">1,182</div><div class="t" style="left:575.2px;top:225.7px;letter-spacing:-0.083px;">Dedicated logic registers</div><div class="t" style="left:729.6px;top:225.7px;">602</div><div class="t" style="left:556.9px;top:241.3px;letter-spacing:0.075px;">Total registers</div><div class="t" style="left:729.6px;top:241.3px;">602</div><div class="t" style="left:556.9px;top:256.9px;letter-spacing:0.017px;">Total pins</div><div class="t" style="left:729.6px;top:256.9px;">34</div><div class="t" style="left:556.9px;top:272.5px;letter-spacing:0.035px;">Total virtual pins</div><div class="t" style="left:729.6px;top:272.5px;">0</div><div class="t" style="left:556.9px;top:288.1px;letter-spacing:-0.022px;">Total memory bits</div><div class="t" style="left:729.6px;top:288.1px;">0</div><div class="t" style="left:556.9px;top:303.7px;letter-spacing:-0.132px;">Embedded Multiplier 9-bit elements</div><div class="t" style="left:729.6px;top:303.7px;">0</div><div class="t" style="left:556.9px;top:319.3px;letter-spacing:-0.288px;">Total PLLs</div><div class="t" style="left:729.6px;top:319.3px;">0</div>
</body></html>
